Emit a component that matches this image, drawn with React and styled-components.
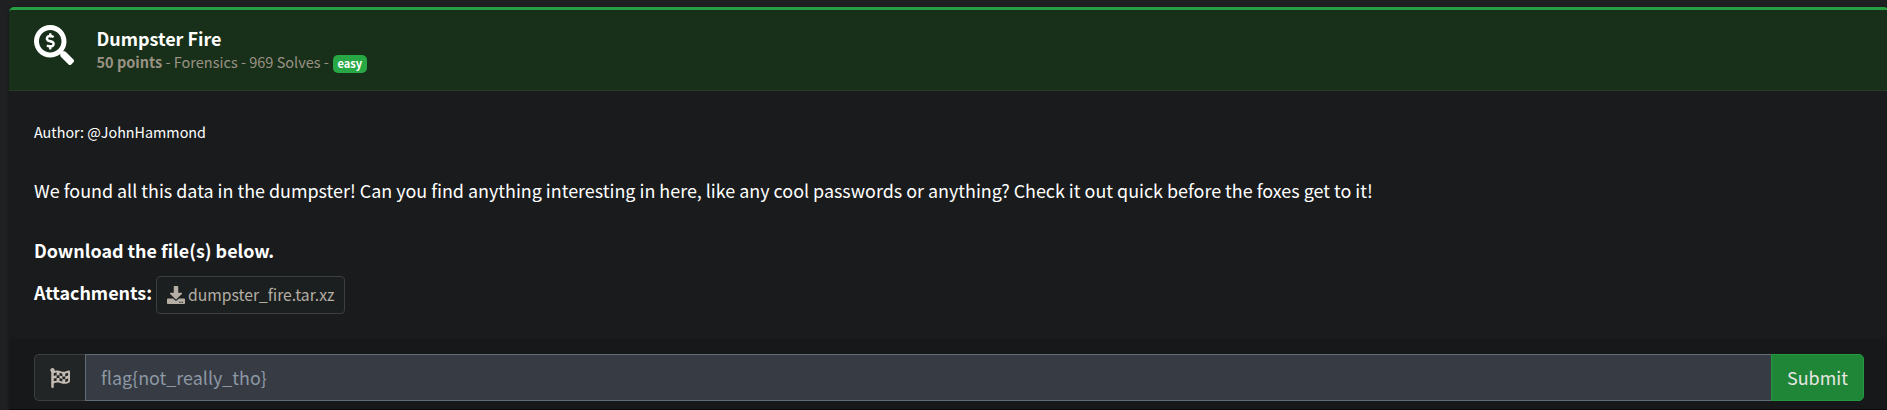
import React from "react";
import styled, { createGlobalStyle } from "styled-components";
import { FaSearchDollar, FaDownload, FaFlagCheckered } from "react-icons/fa";

const GlobalStyle = createGlobalStyle`
  *, *::before, *::after { box-sizing: border-box; }
  html, body { margin: 0; background: #1e2021; overflow: hidden; }
  body, input, button {
    font-family: "Noto Sans CJK SC", "Open Sans", sans-serif;
    font-size: 17.915px;
    line-height: 30px;
  }
`;

const Page = styled.main`
  height: 410px;
  padding: 7px 0 0 9px;
  overflow: hidden;
`;

const Card = styled.section`
  width: 1880px;
  border-top: 3px solid #279e42;
  border-radius: 5px 5px 0 0;
  background: #191b1c;
  color: #fff;
  overflow: hidden;
  box-shadow: 0 0 1px rgba(0, 0, 0, 0.3), 0 1px 3px rgba(0, 0, 0, 0.3);
`;

const CardHeader = styled.header`
  display: flex;
  align-items: flex-start;
  gap: 23px;
  height: 81px;
  padding: 15px 25px 0 24.5px;
  background: #183019;
  border-bottom: 1px solid #273a26;
`;

const HeaderIcon = styled(FaSearchDollar)`
  width: 40px;
  height: 40px;
`;

const Heading = styled.div`
  padding-top: 1px;
`;

const Title = styled.h1`
  margin: 0;
  font-size: 17.95px;
  line-height: 24px;
  font-weight: 700;
`;

const Meta = styled.div`
  display: flex;
  align-items: center;
  gap: 4px;
  color: #9a9284;
  font-size: 14.52px;
  line-height: 24px;
`;

const Badge = styled.span`
  width: 34px;
  height: 18px;
  margin-top: 3px;
  border-radius: 5px;
  background: #28a745;
  color: #fff;
  font-size: 11.1px;
  font-weight: 700;
  line-height: 17px;
  text-align: center;
`;

const CardBody = styled.div`
  height: 248px;
  padding: 26px 25px 0;
`;

const Author = styled.p`
  margin: 0 0 28px;
  font-size: 14.33px;
`;

const Paragraph = styled.p`
  margin: 0 0 30px;
`;

const Strong = styled.p`
  margin: 0;
  font-weight: 700;
`;

const Attachments = styled.div`
  display: flex;
  align-items: flex-start;
  gap: 4px;
  padding-top: 11px;
  line-height: 32px;
`;

const AttachmentButton = styled.button`
  display: flex;
  align-items: center;
  gap: 3px;
  width: 189px;
  height: 38px;
  padding: 0 10px;
  border: 1px solid #3b3f41;
  border-radius: 4px;
  background: #1c1f20;
  color: #b5aea4;
  font-size: 15.7px;
  line-height: 36px;
  white-space: nowrap;
`;

const DownloadIcon = styled(FaDownload)`
  flex: none;
  width: 18px;
  height: 18px;
`;

const CardFooter = styled.footer`
  display: flex;
  height: 71px;
  padding: 15px 25px 8px;
  background: #16181a;
  border-bottom: 1px solid #0a0a0c;
`;

const FlagBox = styled.span`
  display: flex;
  align-items: center;
  justify-content: center;
  width: 51px;
  height: 47px;
  border: 1px solid #3b3f41;
  border-right: 0;
  border-radius: 5px 0 0 5px;
  background: #222526;
  color: #c4bcb2;
`;

const FlagInput = styled.input`
  flex: 1;
  height: 47px;
  padding: 0 15px 2px;
  border: 1px solid #626c76;
  border-right: 0;
  border-radius: 0;
  outline: 0;
  background: #373b43;
  color: #fff;

  &::placeholder {
    color: #8c98a5;
    opacity: 1;
  }
`;

const SubmitButton = styled.button`
  width: 93px;
  height: 47px;
  padding: 0 0 2px;
  border: 1px solid #25993f;
  border-radius: 0 5px 5px 0;
  background: #208637;
  color: #e8e6e3;
`;

export default function App() {
  return (
    <>
      <GlobalStyle />
      <Page>
        <Card>
          <CardHeader>
            <HeaderIcon />
            <Heading>
              <Title>Dumpster Fire</Title>
              <Meta>
                <span>
                  <b>50 points</b> - Forensics - 969 Solves -
                </span>
                <Badge>easy</Badge>
              </Meta>
            </Heading>
          </CardHeader>
          <CardBody>
            <Author>Author: @JohnHammond</Author>
            <Paragraph>
              We found all this data in the dumpster! Can you find anything interesting in here,
              like any cool passwords or anything? Check it out quick before the foxes get to it!
            </Paragraph>
            <Strong>Download the file(s) below.</Strong>
            <Attachments>
              <Strong>Attachments:</Strong>
              <AttachmentButton type="button">
                <DownloadIcon />
                dumpster_fire.tar.xz
              </AttachmentButton>
            </Attachments>
          </CardBody>
          <CardFooter>
            <FlagBox>
              <FaFlagCheckered size={20} />
            </FlagBox>
            <FlagInput placeholder="flag{not_really_tho}" />
            <SubmitButton type="button">Submit</SubmitButton>
          </CardFooter>
        </Card>
      </Page>
    </>
  );
}
